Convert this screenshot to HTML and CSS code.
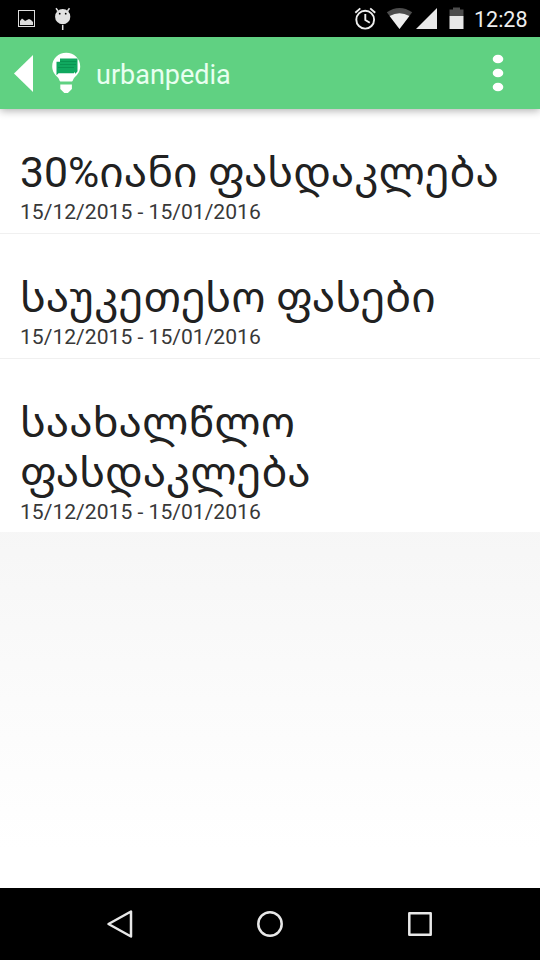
FILE: index.html
```html
<!DOCTYPE html>
<html lang="ka">
<head>
  <meta charset="utf-8">
  <title>urbanpedia</title>
  <link rel="stylesheet" href="styles.css">
</head>
<body>
  <!-- Status bar -->
  <div class="status-bar">
    <svg class="notifications" width="76" height="37" viewBox="0 0 76 37">
      <rect x="18.5" y="10.5" width="16" height="16" fill="none" stroke="#ddd"/>
      <path d="M20 25v-4l2-2.500 2 1.500 1 1 4-2 2 1 2 2v3z" fill="#ddd"/>
      <circle cx="62.7" cy="16.7" r="7.6" fill="#e2e2e2"/>
      <path d="M58 11l-2-2.700M67.500 11l2-2.700M62.700 25v5" stroke="#e2e2e2" stroke-width="1.500"/>
      <circle cx="59.7" cy="13.700" r=".9"/>
      <circle cx="65.700" cy="13.700" r=".9"/>
    </svg>
    <svg class="indicators" width="122" height="37" viewBox="352 0 122 37">
      <g fill="none" stroke="#eee" stroke-width="1.900">
        <circle cx="365.200" cy="19.700" r="8.900"/>
        <path d="M365.300 14v6l4.500 2.800M355.300 12.700l5-4.300M375.200 12.700l-5-4.300"/>
      </g>
      <path d="M386.800 12.300Q399.500 3.500 412.200 12.300L399.500 29z" fill="#4d4d4d"/>
      <path d="M389.600 16Q399.500 10.500 409.400 16L399.500 29z" fill="#eee"/>
      <path d="M416 29L437 8v21z" fill="#e8e8e8"/>
      <path d="M449.500 9.500h3.500v-2h7v2h3.500V16h-14z" fill="#4d4d4d"/>
      <rect x="449.500" y="16" width="14" height="13" fill="#e8e8e8"/>
    </svg>
    <span class="clock">12:28</span>
  </div>

  <!-- Action bar -->
  <div class="action-bar">
    <svg class="logo" width="84" height="72" viewBox="0 37 84 72">
      <path d="M33 55v37L14 73.500z" fill="#fff"/>
      <path d="M66.200 52.800c-8 0-14 6.100-14 13.600 0 5.200 3 8.600 5.700 11 1.400 1.300 1.400 4.100 3.200 4.100h10.200c1.800 0 1.800-2.800 3.200-4.100 2.700-2.400 5.700-5.800 5.700-11 0-7.500-6-13.600-14-13.600z" fill="#fff"/>
      <path d="M60.300 84.500h11.600v4.500l-4 4h-3.600l-4-4z" fill="#fff"/>
      <path d="M60 58.500h17.500v12.800l-2 2.400-1.500-2v1.500H58.500l-2 2v-13.500H60z" fill="#10a85f"/>
      <path d="M60 61.500h16.500M60 64.500h16M58 67.500h16" stroke="#078b4c" stroke-width=".7"/>
    </svg>
    <h1 class="app-name">urbanpedia</h1>
    <svg class="overflow" width="12" height="38" viewBox="0 0 12 38" fill="#fff">
      <ellipse cx="6" cy="5" rx="5.300" ry="4.300"/>
      <ellipse cx="6" cy="19" rx="5.300" ry="4.300"/>
      <ellipse cx="6" cy="33" rx="5.300" ry="4.300"/>
    </svg>
  </div>

  <!-- Sales list -->
  <div class="content">
    <div class="sale">
      <h2 class="sale-title">30%იანი ფასდაკლება</h2>
      <div class="sale-date">15/12/2015 - 15/01/2016</div>
    </div>
    <div class="sale">
      <h2 class="sale-title">საუკეთესო ფასები</h2>
      <div class="sale-date">15/12/2015 - 15/01/2016</div>
    </div>
    <div class="sale">
      <h2 class="sale-title">საახალწლო<br>ფასდაკლება</h2>
      <div class="sale-date">15/12/2015 - 15/01/2016</div>
    </div>
  </div>

  <!-- Navigation bar -->
  <div class="nav-bar">
    <svg width="26" height="30" viewBox="0 0 26 30"><path d="M24 2.500v25L1.500 15z"/></svg>
    <svg width="28" height="28" viewBox="0 0 28 28"><circle cx="14" cy="14" r="11.700"/></svg>
    <svg width="26" height="26" viewBox="0 0 26 26"><rect x="2.300" y="2.300" width="21.400" height="21.400"/></svg>
  </div>
</body>
</html>
```
FILE: styles.css
```css
* {
  box-sizing: border-box;
}

body {
  margin: 0;
  height: 960px;
  display: flex;
  flex-direction: column;
  overflow: hidden;
  font-family: Roboto, "Noto Sans Georgian", "DejaVu Sans", sans-serif;
}

h1, h2 {
  margin: 0;
  font-weight: 400;
}

/* Status bar */
.status-bar {
  display: flex;
  height: 37px;
  background: #000;
}

.indicators {
  margin-left: auto;
}

.clock {
  width: 66px;
  color: #eee;
  font-size: 21.5px;
  line-height: 39px;
  white-space: nowrap;
}

/* Action bar */
.action-bar {
  position: relative;
  display: flex;
  align-items: center;
  height: 72px;
  padding-right: 36px;
  background: #60d182;
  box-shadow: 0 2px 8px rgba(0, 0, 0, .3);
}

.app-name {
  margin-left: 12px;
  padding-top: 4px;
  color: #e8fff0;
  font-size: 27px;
  line-height: 68px;
}

.overflow {
  margin-left: auto;
}

/* List */
.content {
  flex: 1;
  background: linear-gradient(#ebebeb, #fff 95%);
}

.sale {
  padding: 38px 20px 8px;
  border-bottom: 1px solid #f0f0f0;
  background: #fff;
}

.sale:last-child {
  padding-bottom: 7px;
  border-bottom: 0;
}

.sale-title {
  color: #212121;
  font-size: 42.7px;
  line-height: 50px;
  white-space: nowrap;
}

.sale-date {
  padding-top: 2px;
  color: #383838;
  font-size: 21.1px;
  line-height: 26px;
}

/* Navigation bar */
.nav-bar {
  display: flex;
  align-items: center;
  justify-content: space-between;
  height: 72px;
  padding: 0 107px;
  background: #000;
}

.nav-bar svg {
  fill: none;
  stroke: #e8e8e8;
  stroke-width: 2.5;
  stroke-linejoin: round;
}
```
